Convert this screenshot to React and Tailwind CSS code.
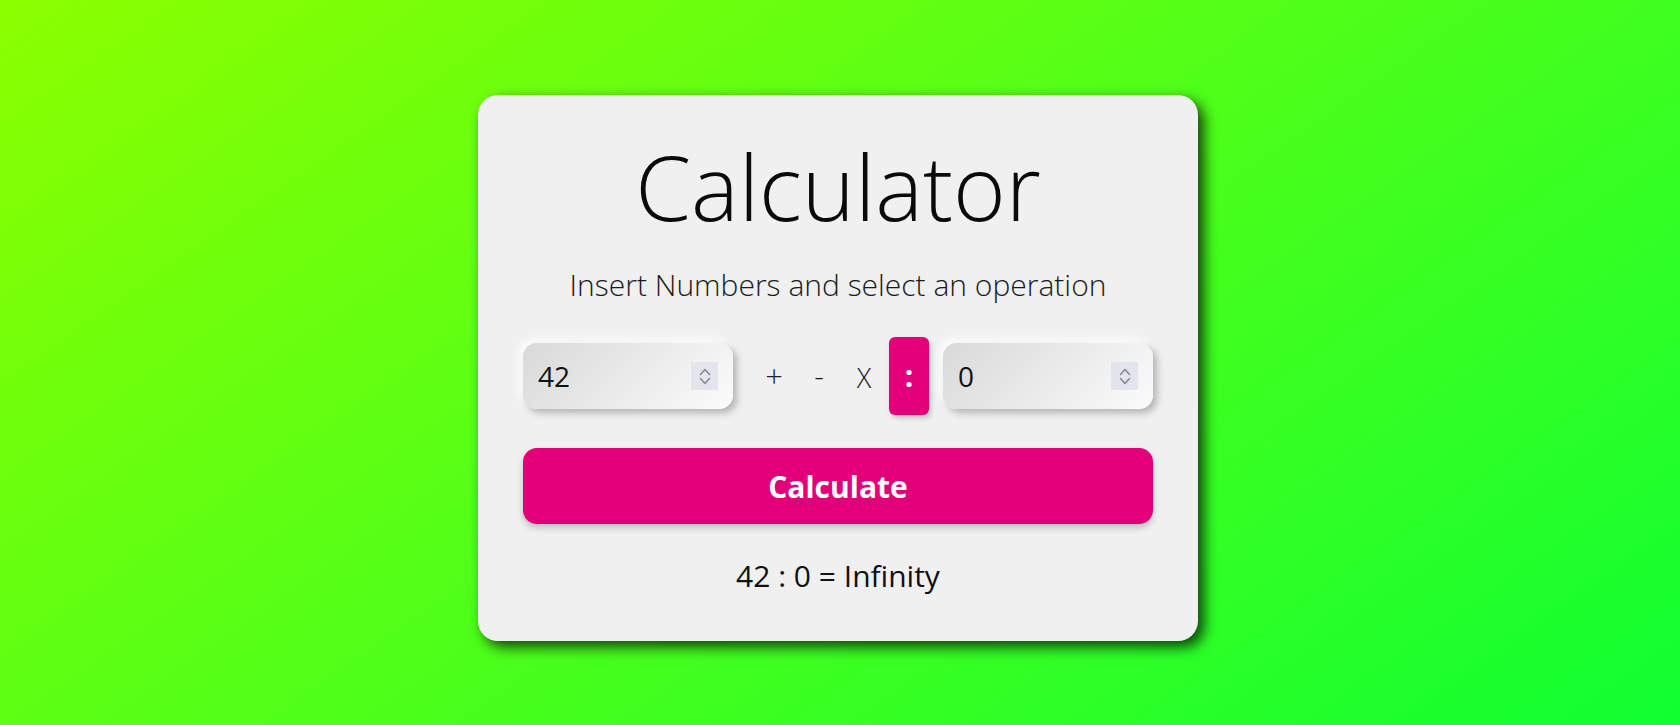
import React from "react";

function Spinner() {
  return (
    <div className="w-[27px] h-[28px] bg-[#e4e4ec] flex flex-col items-center justify-center gap-[1px]">
      <svg width="14" height="9" viewBox="0 0 14 9" fill="none">
        <path d="M2.5 7.5 L7 2.5 L11.5 7.5" stroke="#8a8a96" strokeWidth="1.6" strokeLinecap="round" strokeLinejoin="round" />
      </svg>
      <svg width="14" height="9" viewBox="0 0 14 9" fill="none">
        <path d="M2.5 1.5 L7 6.5 L11.5 1.5" stroke="#8a8a96" strokeWidth="1.6" strokeLinecap="round" strokeLinejoin="round" />
      </svg>
    </div>
  );
}

function NumberBox({ value }) {
  return (
    <div className="w-[210px] h-[66px] rounded-[14px] bg-[linear-gradient(135deg,#d9d9d9,#fbfbfb)] shadow-[4px_4px_7px_rgba(0,0,0,0.25),-4px_-4px_8px_rgba(255,255,255,0.9)] flex items-center justify-between pl-[15px] pr-[15px]">
      <span className="text-[28px] leading-none text-[#111] font-['Open_Sans',sans-serif]">{value}</span>
      <Spinner />
    </div>
  );
}

export default function App() {
  return (
    <div className="w-full h-[725px] overflow-hidden bg-[linear-gradient(145deg,#8cff00,#10ff32)] flex justify-center items-start pt-[95px] font-['Open_Sans',sans-serif]">
      <div className="w-[720px] ml-[-4px] bg-[#f0f0f0] rounded-[20px] shadow-[6px_6px_14px_rgba(0,0,0,0.75)] px-[45px] pb-[45px] flex flex-col items-stretch">
        <h1 className="mt-[46px] text-center text-[90px] leading-none font-light text-[#0a0a0a]">Calculator</h1>
        <p className="mt-[33px] text-center text-[30px] leading-[41px] font-light text-[#1a1a1a]">
          Insert Numbers and select an operation
        </p>
        <div className="mt-[32px] flex items-center h-[78px]">
          <NumberBox value="42" />
          <div className="ml-[21px] flex items-center gap-[5px] h-full">
            <button className="w-10 h-full flex items-center justify-center text-[31px] font-light text-[#222] leading-none">+</button>
            <button className="w-10 h-full flex items-center justify-center text-[30px] font-light text-[#222] leading-none">-</button>
            <button className="w-10 h-full flex items-center justify-center text-[27px] font-light text-[#222] leading-none pt-[3px]">X</button>
            <button className="w-10 h-full flex items-center justify-center rounded-[6px] bg-[#e2007a] text-white text-[30px] font-bold leading-none shadow-[2px_3px_5px_rgba(0,0,0,0.2)]">:</button>
          </div>
          <div className="ml-auto">
            <NumberBox value="0" />
          </div>
        </div>
        <button className="mt-[33px] h-[76px] w-full rounded-[14px] bg-[#e2007a] text-white text-[30px] font-bold shadow-[0_4px_6px_rgba(0,0,0,0.2)] flex items-center justify-center">
          Calculate
        </button>
        <p className="mt-[31px] text-center text-[30px] leading-[41px] text-[#111]">42 : 0 = Infinity</p>
      </div>
    </div>
  );
}
